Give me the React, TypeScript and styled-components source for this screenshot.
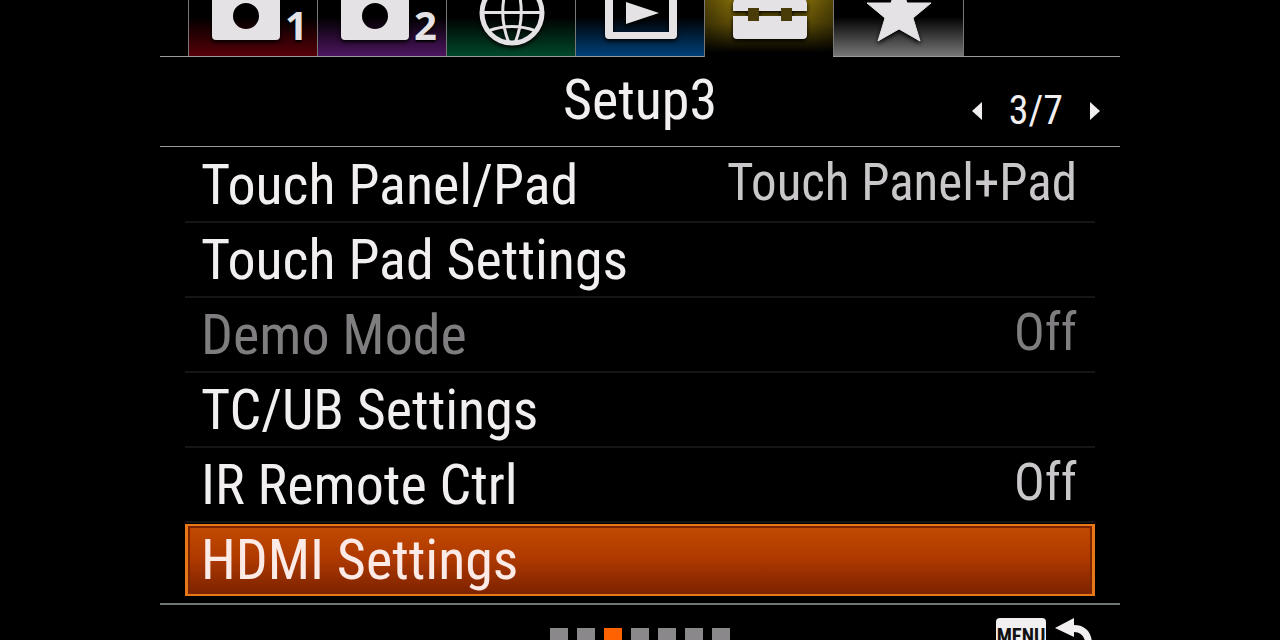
import React from "react";
import styled, { createGlobalStyle, css } from "styled-components";

const GlobalStyle = createGlobalStyle`
  * { box-sizing: border-box; }
  body { margin: 0; background: #000; overflow: hidden; }
  button { font: inherit; color: inherit; background: none; border: 0; padding: 0; margin: 0; cursor: pointer; }
`;

const LINE = "#9c9c9c";

const Screen = styled.main`
  display: flex;
  flex-direction: column;
  width: 75%;
  height: 100vh;
  margin: 0 auto;
  overflow: hidden;
  color: #f2eff1;
  background: #000;
  font-family: "Roboto Condensed", "Liberation Sans Narrow", "Liberation Sans", sans-serif;
`;

const TabBar = styled.nav`
  display: flex;
  flex: none;
  height: 57px;
  padding-left: 28px;
  border-bottom: 1px solid ${LINE};
`;

const Tab = styled.button<{ $tint: string; $selected?: boolean; $numbered?: boolean }>`
  display: flex;
  align-items: flex-start;
  justify-content: center;
  flex: 0 1 129px;
  height: 56px;
  padding-left: ${(p) => (p.$numbered ? 14 : 1)}px;
  overflow: hidden;
  border-left: 1px solid #777;
  background: ${(p) => `linear-gradient(#000 30%, ${p.$tint})`};
  &:last-child { border-right: 1px solid #777; flex-basis: 131px; }
  ${(p) =>
    p.$selected &&
    css`
      height: 57px;
      background: linear-gradient(90deg, #0005, #0000 20%, #0000 80%, #0005),
        linear-gradient(#7c6708, #5c4c06 40%, #000 92%);
    `}
`;

const TabIcon = styled.svg`
  display: block;
  flex: none;
  height: 56px;
  fill: #e4e2e4;
  filter: drop-shadow(0 2px 2px #000);
`;

const TabNumber = styled.span`
  width: 24px;
  margin-left: 5px;
  color: #e4e2e4;
  font: 700 40px/50px "Open Sans", "Noto Sans", sans-serif;
  text-shadow: 0 2px 2px #000;
`;

const Header = styled.header`
  display: grid;
  grid-template-columns: 1fr auto 1fr;
  align-items: center;
  flex: none;
  height: 90px;
  padding: 0 20px;
  border-bottom: 1px solid ${LINE};
`;

const Title = styled.h1`
  grid-column: 2;
  margin: 0;
  font-size: 56px;
  font-weight: 400;
  line-height: 84px;
  padding-bottom: 4px;
`;

const Pager = styled.div`
  display: flex;
  align-items: center;
  justify-self: end;
  gap: 27px;
  padding-top: 18px;
  font-size: 40px;
  line-height: 48px;
`;

const Arrow = styled.button`
  display: flex;
  svg { display: block; fill: #f2eff1; }
`;

const List = styled.ul`
  flex: none;
  margin: 0 25px;
  padding: 1px 0 0;
  list-style: none;
`;

const Item = styled.li`
  height: 75px;
  border-bottom: 2px solid #151515;
  &:last-child { padding-top: 1px; border: 0; }
`;

const Row = styled.button<{ $selected?: boolean }>`
  display: flex;
  align-items: center;
  justify-content: space-between;
  width: 100%;
  height: 73px;
  padding: 0 18px 0 16px;
  text-align: left;
  font-size: 56px;
  line-height: 68px;
  &:disabled { color: #7f7d7f; }
  ${(p) =>
    p.$selected &&
    css`
      height: 72px;
      padding-left: 13px;
      color: #fbeae6;
      border: 3px solid #e67817;
      border-width: 2px 3px;
      box-shadow: inset 0 0 0 2px #7a2400;
      background: linear-gradient(#c24a00, #b03a00 45%, #7c2200);
    `}
`;

const Value = styled.span`
  padding-bottom: 4px;
  color: #c9c7c9;
  font-size: 51px;
  ${Row}:disabled & { color: inherit; }
`;

const Footer = styled.footer`
  display: grid;
  grid-template-columns: 1fr auto 1fr;
  flex: none;
  height: 60px;
  margin-top: 5px;
  padding: 0 28px;
  border-top: 2px solid #6f7577;
`;

const Dots = styled.div`
  display: flex;
  grid-column: 2;
  gap: 9px;
  padding-top: 23px;
`;

const Dot = styled.button<{ $current: boolean }>`
  width: 18px;
  height: 18px;
  background: ${(p) => (p.$current ? "#ff6200" : "#8a888a")};
`;

const Back = styled.button`
  display: flex;
  align-items: flex-start;
  justify-self: end;
  gap: 9px;
  height: 50px;
  padding-top: 13px;
`;

const MenuKey = styled.span`
  width: 50px;
  height: 32px;
  padding-top: 6px;
  border-radius: 4px;
  color: #111;
  background: #f2eff1;
  text-align: center;
  font-size: 20px;
  font-weight: 700;
  line-height: 24px;
`;

const Camera = () => (
  <TabIcon width="68" viewBox="0 0 68 56" aria-hidden="true">
    <path fillRule="evenodd" d="M0 0H68V36a4 4 0 0 1-4 4H4a4 4 0 0 1-4-4ZM34 3a13 13 0 1 0 0 26a13 13 0 1 0 0-26Z" />
  </TabIcon>
);

const Globe = () => (
  <TabIcon width="68" viewBox="0 0 68 56" aria-hidden="true">
    <g fill="none" stroke="#e4e2e4" strokeWidth="3">
      <circle cx="34" cy="13" r="30" strokeWidth="5" />
      <path d="M4 12.5H64M30 -17Q19 13 31 43M38 -17Q49 13 37 43M10 31Q34 22 58 31" />
    </g>
  </TabIcon>
);

const Playback = () => (
  <TabIcon width="72" viewBox="0 0 72 56" aria-hidden="true">
    <path fillRule="evenodd" d="M0 -10H72V35a4 4 0 0 1-4 4H4a4 4 0 0 1-4-4ZM8 -5V32H64V-5Z" />
    <path d="M21 2L54 13L21 24Z" />
  </TabIcon>
);

const Toolbox = () => (
  <TabIcon width="74" viewBox="0 0 74 56" aria-hidden="true">
    <path d="M2 -2H72L74 3V11H59V8H48V11H26V8H15V11H0V3Z" />
    <path d="M0 16H15V21H26V16H48V21H59V16H74V35a4 4 0 0 1-4 4H4a4 4 0 0 1-4-4Z" />
    <path d="M15 8H26V21H15ZM48 8H59V21H48Z" fill="#4a3c08" />
  </TabIcon>
);

const Star = () => (
  <TabIcon width="68" viewBox="0 0 68 56" aria-hidden="true">
    <path
      d="M34 -20L42 3H66L48 18L55 41L34 29L13 41L20 18L2 3H26Z"
      stroke="#e4e2e4"
      strokeLinejoin="round"
    />
  </TabIcon>
);

const tabs = [
  { name: "Camera Settings 1", tint: "#560008", icon: <Camera />, number: "1" },
  { name: "Camera Settings 2", tint: "#4d1560", icon: <Camera />, number: "2" },
  { name: "Network", tint: "#00482a", icon: <Globe /> },
  { name: "Playback", tint: "#004078", icon: <Playback /> },
  { name: "Setup", tint: "#000", icon: <Toolbox />, selected: true },
  { name: "My Menu", tint: "#777", icon: <Star /> },
];

const items = [
  { label: "Touch Panel/Pad", value: "Touch Panel+Pad" },
  { label: "Touch Pad Settings" },
  { label: "Demo Mode", value: "Off", disabled: true },
  { label: "TC/UB Settings" },
  { label: "IR Remote Ctrl", value: "Off" },
  { label: "HDMI Settings", selected: true },
];

const pages = [1, 2, 3, 4, 5, 6, 7];

export default function App() {
  return (
    <>
      <GlobalStyle />
      <Screen>
        <TabBar aria-label="Menu tabs">
          {tabs.map((t) => (
            <Tab
              key={t.name}
              aria-label={t.name}
              $tint={t.tint}
              $selected={t.selected}
              $numbered={Boolean(t.number)}
            >
              {t.icon}
              {t.number && <TabNumber>{t.number}</TabNumber>}
            </Tab>
          ))}
        </TabBar>
        <Header>
          <Title>Setup3</Title>
          <Pager>
            <Arrow aria-label="Previous page">
              <svg width="10" height="18" viewBox="0 0 10 18"><path d="M10 0V18L0 9Z" /></svg>
            </Arrow>
            <span>3/7</span>
            <Arrow aria-label="Next page">
              <svg width="10" height="18" viewBox="0 0 10 18"><path d="M0 0V18L10 9Z" /></svg>
            </Arrow>
          </Pager>
        </Header>
        <List>
          {items.map((i) => (
            <Item key={i.label}>
              <Row disabled={i.disabled} $selected={i.selected}>
                <span>{i.label}</span>
                {i.value && <Value>{i.value}</Value>}
              </Row>
            </Item>
          ))}
        </List>
        <Footer>
          <Dots>
            {pages.map((p) => (
              <Dot key={p} $current={p === 3} aria-label={`Page ${p}`} />
            ))}
          </Dots>
          <Back>
            <MenuKey>MENU</MenuKey>
            <svg width="37" height="34" viewBox="0 0 37 34" aria-hidden="true">
              <path d="M0 10L19 0V7C31 7 37 15 37 26V32H30C32 21 27 14 19 14V19Z" fill="#f2eff1" />
            </svg>
          </Back>
        </Footer>
      </Screen>
    </>
  );
}
